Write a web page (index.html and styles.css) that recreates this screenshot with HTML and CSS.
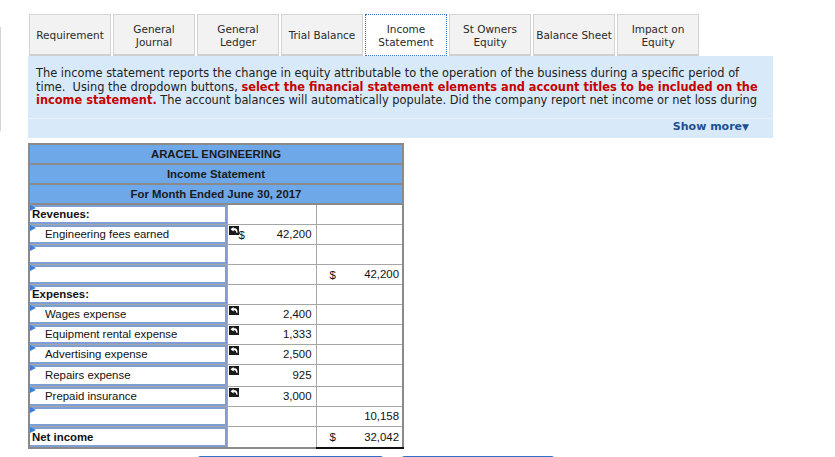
FILE: index.html
```html
<!DOCTYPE html>
<html lang="en">
<head>
<meta charset="utf-8">
<title>Income Statement</title>
<link rel="stylesheet" href="styles.css">
</head>
<body>
<div class="edge"></div>
<div class="page">
  <nav class="tabs">
    <div class="tab">Requirement</div>
    <div class="tab">General<br>Journal</div>
    <div class="tab">General<br>Ledger</div>
    <div class="tab">Trial Balance</div>
    <div class="tab active">Income<br>Statement</div>
    <div class="tab">St Owners<br>Equity</div>
    <div class="tab">Balance Sheet</div>
    <div class="tab">Impact on<br>Equity</div>
  </nav>
  <section class="panel">
    <p class="intro">The income statement reports the change in equity attributable to the operation of the business during a specific period of time.&nbsp; Using the dropdown buttons, <strong class="hl">select the financial statement elements and account titles to be included on the income statement.</strong> The account balances will automatically populate. Did the company report net income or net loss during</p>
    <div class="more"><span class="more-link">Show more<span class="caret">&#9660;</span></span></div>
  </section>

  <table class="stmt">
    <colgroup><col class="k1"><col class="k2"><col class="k3"></colgroup>
    <tr class="hd"><th colspan="3">ARACEL ENGINEERING</th></tr>
    <tr class="hd"><th colspan="3">Income Statement</th></tr>
    <tr class="hd"><th colspan="3">For Month Ended June 30, 2017</th></tr>

    <tr><td class="lbl"><div class="inp bold">Revenues:</div></td><td class="c2"></td><td class="c3"></td></tr>
    <tr><td class="lbl"><div class="inp ind">Engineering fees earned</div></td><td class="c2"><span class="ico"><svg viewBox="0 0 10 9" width="10" height="9"><rect width="10" height="9" fill="#1a1a1a"/><path d="M1.5 3.2 L4.6 0.9 L4.6 2.3 L6 2.3 Q8.5 2.5 8.6 6.8 L7.4 6.8 Q7.2 4.3 5.8 4.2 L4.6 4.2 L4.6 5.6 Z" fill="#fff"/></svg></span><span class="cur">$</span><span class="num">42,200</span></td><td class="c3"></td></tr>
    <tr><td class="lbl"><div class="inp"></div></td><td class="c2"></td><td class="c3"></td></tr>
    <tr><td class="lbl"><div class="inp"></div></td><td class="c2"></td><td class="c3"><span class="cur">$</span><span class="num">42,200</span></td></tr>

    <tr><td class="lbl"><div class="inp bold">Expenses:</div></td><td class="c2"></td><td class="c3"></td></tr>
    <tr><td class="lbl"><div class="inp ind">Wages expense</div></td><td class="c2"><span class="ico"><svg viewBox="0 0 10 9" width="10" height="9"><rect width="10" height="9" fill="#1a1a1a"/><path d="M1.5 3.2 L4.6 0.9 L4.6 2.3 L6 2.3 Q8.5 2.5 8.6 6.8 L7.4 6.8 Q7.2 4.3 5.8 4.2 L4.6 4.2 L4.6 5.6 Z" fill="#fff"/></svg></span><span class="num">2,400</span></td><td class="c3"></td></tr>
    <tr><td class="lbl"><div class="inp ind">Equipment rental expense</div></td><td class="c2"><span class="ico"><svg viewBox="0 0 10 9" width="10" height="9"><rect width="10" height="9" fill="#1a1a1a"/><path d="M1.5 3.2 L4.6 0.9 L4.6 2.3 L6 2.3 Q8.5 2.5 8.6 6.8 L7.4 6.8 Q7.2 4.3 5.8 4.2 L4.6 4.2 L4.6 5.6 Z" fill="#fff"/></svg></span><span class="num">1,333</span></td><td class="c3"></td></tr>
    <tr><td class="lbl"><div class="inp ind">Advertising expense</div></td><td class="c2"><span class="ico"><svg viewBox="0 0 10 9" width="10" height="9"><rect width="10" height="9" fill="#1a1a1a"/><path d="M1.5 3.2 L4.6 0.9 L4.6 2.3 L6 2.3 Q8.5 2.5 8.6 6.8 L7.4 6.8 Q7.2 4.3 5.8 4.2 L4.6 4.2 L4.6 5.6 Z" fill="#fff"/></svg></span><span class="num">2,500</span></td><td class="c3"></td></tr>
    <tr class="tall"><td class="lbl"><div class="inp ind">Repairs expense</div></td><td class="c2"><span class="ico"><svg viewBox="0 0 10 9" width="10" height="9"><rect width="10" height="9" fill="#1a1a1a"/><path d="M1.5 3.2 L4.6 0.9 L4.6 2.3 L6 2.3 Q8.5 2.5 8.6 6.8 L7.4 6.8 Q7.2 4.3 5.8 4.2 L4.6 4.2 L4.6 5.6 Z" fill="#fff"/></svg></span><span class="num">925</span></td><td class="c3"></td></tr>
    <tr><td class="lbl"><div class="inp ind">Prepaid insurance</div></td><td class="c2"><span class="ico"><svg viewBox="0 0 10 9" width="10" height="9"><rect width="10" height="9" fill="#1a1a1a"/><path d="M1.5 3.2 L4.6 0.9 L4.6 2.3 L6 2.3 Q8.5 2.5 8.6 6.8 L7.4 6.8 Q7.2 4.3 5.8 4.2 L4.6 4.2 L4.6 5.6 Z" fill="#fff"/></svg></span><span class="num">3,000</span></td><td class="c3"></td></tr>
    <tr><td class="lbl"><div class="inp"></div></td><td class="c2"></td><td class="c3"><span class="num">10,158</span></td></tr>
    <tr class="net"><td class="lbl"><div class="inp bold">Net income</div></td><td class="c2"></td><td class="c3 total"><span class="cur">$</span><span class="num">32,042</span></td></tr>
  </table>

  <div class="buttons">
    <div class="btn b1"></div>
    <div class="btn b2"></div>
  </div>
</div>
</body>
</html>
```

FILE: styles.css
```css
html, body {
  margin: 0;
  padding: 0;
  background: #fff;
  overflow: hidden;
  height: 457px;
}
body {
  font-family: "DejaVu Sans", Verdana, sans-serif;
  color: #222;
  position: relative;
}
.edge {
  position: absolute;
  left: 0;
  top: 27px;
  width: 1px;
  height: 104px;
  background: #d4d4d4;
}
.page {
  padding: 14px 0 0 28px;
}
.tabs {
  display: flex;
  gap: 2px;
  margin-left: 1px;
  height: 42px;
  align-items: stretch;
}
.tab {
  box-sizing: border-box;
  width: 82px;
  padding-top: 2px;
  background: #f2f2f2;
  border: 1px solid #d3d3d3;
  border-bottom: 2px solid #cfcfcf;
  display: flex;
  align-items: center;
  justify-content: center;
  text-align: center;
  font-size: 10.5px;
  line-height: 13px;
  color: #2a2a2a;
}
.tab.active {
  background: #fff;
  border: 1px dotted #3a6fc4;
  border-bottom: 1px dotted #3a6fc4;
}
.panel {
  width: 745px;
  background: #d8eaf9;
}
.intro {
  margin: 0;
  padding: 11px 12px 8px 8px;
  font-size: 11.4px;
  line-height: 13.5px;
  color: #222;
  height: 43px;
}
.hl {
  color: #c80000;
  font-weight: bold;
}
.more {
  border-top: 1px solid #e6f1fb;
  height: 19px;
  display: flex;
  justify-content: flex-end;
  align-items: flex-start;
  padding-right: 24px;
  line-height: 13px;
}
.more-link {
  margin-top: 1px;
  font-weight: bold;
  font-size: 11px;
  color: #1d4f93;
}
.caret {
  font-size: 9px;
}
.stmt {
  margin-top: 5px;
  border-collapse: collapse;
  table-layout: fixed;
  width: 374px;
  font-family: "Liberation Sans", Arial, sans-serif;
  font-size: 11.4px;
  color: #111;
  border: 2px solid #8a8a8a;
}
.k1 { width: 198px; }
.k2 { width: 89px; }
.k3 { width: 87px; }
.stmt th {
  background: #6fa8e8;
  border: 2px solid #8a8a8a;
  border-left: 0;
  border-right: 0;
  height: 18px;
  padding: 0;
  line-height: 14px;
  font-weight: bold;
  color: #1b1b1b;
}
.stmt td {
  border: 1px solid #a6a6a6;
  height: 19px;
  padding: 0;
  vertical-align: middle;
  line-height: 13px;
}
.stmt tr.tall td { height: 21px; }
.stmt tr.net td { height: 20px; }
.stmt td.lbl {
  border-left: 0;
  position: relative;
}
.inp {
  box-sizing: border-box;
  height: 19px;
  border-top: 2px solid #7d9fd6;
  border-bottom: 2px solid #7d9fd6;
  border-right: 2px solid #7d9fd6;
  background: #fff;
  padding-left: 2px;
  line-height: 15px;
  position: relative;
}
.tall .inp { height: 21px; line-height: 17px; }
.net .inp { height: 20px; line-height: 16px; }
.inp::before {
  content: "";
  position: absolute;
  left: 0;
  top: -2px;
  border-top: 3px solid transparent;
  border-bottom: 3px solid transparent;
  border-left: 6px solid #3a7fd9;
}
.inp.bold {
  font-weight: bold;
}
.inp.ind {
  padding-left: 15px;
}
.stmt td.c2 {
  position: relative;
  text-align: right;
  padding-right: 4px;
}
.stmt td.c3 {
  position: relative;
  text-align: right;
  padding-right: 3px;
  border-right: 0;
}
.ico {
  position: absolute;
  left: 1px;
  top: 1px;
  line-height: 0;
}
.c2 .cur {
  position: absolute;
  left: 11px;
  top: 4px;
}
.c3 .cur {
  position: absolute;
  left: 13px;
  top: 4px;
}
.stmt td.total {
  border-left: 1px solid #333;
  border-bottom: 2px solid #111;
}
.buttons {
  display: flex;
  gap: 17px;
  margin-top: 7px;
  margin-left: 169px;
}
.btn {
  height: 20px;
  background: #2e6fc7;
  border-radius: 4px 4px 0 0;
}
.b1 { width: 187px; }
.b2 { width: 154px; }
```
